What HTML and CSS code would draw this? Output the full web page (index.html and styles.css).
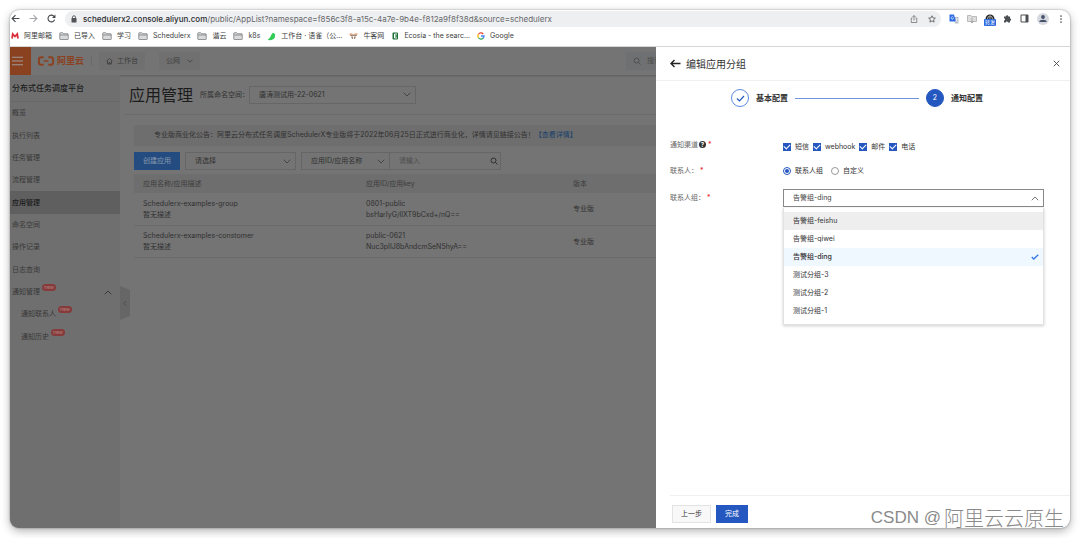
FILE: index.html
```html
<!DOCTYPE html>
<html lang="zh-CN">
<head>
<meta charset="utf-8">
<title>应用管理</title>
<link rel="stylesheet" href="styles.css">
</head>
<body>
<svg class="defs" width="0" height="0" aria-hidden="true">
  <symbol id="folder" viewBox="0 0 20 16"><path d="M1.500 14V2.500q0-1 1-1h5l2 2h8q1 0 1 1V14q0 1-1 1h-15q-1 0-1-1z" fill="#d9dadb" stroke="#77797b" stroke-width="1.500"/><path d="M2 6h16" stroke="#77797b" stroke-width="1.500"/></symbol>
  <symbol id="chev" viewBox="0 0 16 10"><path d="M1.500 1.500 8 8l6.500-6.500" fill="none" stroke="currentColor" stroke-width="2"/></symbol>
  <symbol id="lens" viewBox="0 0 16 16"><circle cx="7" cy="7" r="5" fill="none" stroke="currentColor" stroke-width="2"/><path d="m10.500 10.500 4.500 4.500" stroke="currentColor" stroke-width="2"/></symbol>
</svg>
<div class="window">
  <header class="toolbar">
    <button class="tool" aria-label="后退"><svg viewBox="0 0 16 16"><path d="M15 8H2M8 2 2 8l6 6" fill="none" stroke="#45484c" stroke-width="2"/></svg></button>
    <button class="tool" aria-label="前进"><svg viewBox="0 0 16 16"><path d="M1 8h13M8 2l6 6-6 6" fill="none" stroke="#a5a7aa" stroke-width="2"/></svg></button>
    <button class="tool" aria-label="刷新"><svg viewBox="0 0 16 16"><path d="M13.500 10A6 6 0 1 1 12 3.700L14 6" fill="none" stroke="#45484c" stroke-width="2"/><path d="M15 1v6H9z" fill="#45484c"/></svg></button>
    <div class="address">
      <svg class="lock" viewBox="0 0 12 16"><rect x="1" y="6" width="10" height="9" rx="1" fill="#505357"/><path d="M3 7V4.500a3 3 0 0 1 6 0V7" fill="none" stroke="#505357" stroke-width="1.800"/></svg>
      <span class="url"><b>schedulerx2.console.aliyun.com</b>/public/AppList?namespace=f856c3f8-a15c-4a7e-9b4e-f812a9f8f38d&amp;source=schedulerx</span>
      <svg class="ic8 share" viewBox="0 0 16 16"><path d="M5 6H2.500v9h11V6H11M8 11V1.500M5 4l3-3 3 3" fill="none" stroke="#606366" stroke-width="1.400"/></svg>
      <svg class="ic8" viewBox="0 0 16 16"><path d="m8 1.500 2 4.300 4.700.5-3.500 3.200 1 4.700L8 11.800l-4.200 2.400 1-4.700L1.300 6.300 6 5.800z" fill="none" stroke="#505357" stroke-width="1.600"/></svg>
    </div>
    <div class="extensions">
      <svg class="ic10" viewBox="0 0 20 20"><path d="M9 6h10v13H12z" fill="#b9bec8"/><path d="M1 1h9l4 14H1z" fill="#2f6de5"/><path d="M9 6.500A2.500 2.500 0 1 0 9 9H7M13 10h5m-2.500-1v1c0 3-1.500 5-3 6m1-4 4 4" fill="none" stroke="#fff" stroke-width="1.200"/></svg>
      <svg class="ic10" viewBox="0 0 20 20"><path d="M1 3h7l2 2h9v10H1z" fill="#dedede" stroke="#aaa" stroke-width="1.500"/><path d="M10 7v11m-3-3 3 3 3-3" fill="none" stroke="#999" stroke-width="1.600"/></svg>
      <span class="forward"><svg class="ic10" viewBox="0 0 20 20"><circle cx="10" cy="10" r="9" fill="#222"/><path d="M5 12c0-6 2-8 5-8s5 2 5 8M10 5v7" fill="none" stroke="#ddd" stroke-width="1.600"/></svg><span class="forward-tag">转发</span></span>
      <svg class="ic9" viewBox="0 0 18 18"><path d="M2 5h4a2.300 2.300 0 1 1 4.600 0H14v4a2.300 2.300 0 1 1 0 4.600V17h-4a2.200 2.200 0 0 0-4.400 0H2v-4a2.200 2.200 0 0 0 0-4.400z" fill="#4b4e53"/></svg>
      <svg class="ic9" viewBox="0 0 18 18"><path d="M2 2h14v14H2z" fill="none" stroke="#4b4e53" stroke-width="2"/><path d="M11 2h5v14h-5z" fill="#4b4e53"/></svg>
      <svg class="ic12" viewBox="0 0 24 24"><circle cx="12" cy="12" r="12" fill="#d5d8de"/><circle cx="12" cy="8" r="3.800" fill="#46506a"/><path d="M4.500 18c0-6 15-6 15 0z" fill="#46506a"/></svg>
      <svg class="ic8" viewBox="0 0 16 16"><g fill="#4b4e53"><circle cx="8" cy="2" r="1.700"/><circle cx="8" cy="8" r="1.700"/><circle cx="8" cy="14" r="1.700"/></g></svg>
    </div>
  </header>
  <nav class="bookmarks" aria-label="书签">
    <a href="#"><svg class="ic8" viewBox="0 0 16 16"><path d="M2 13 3.500 4 8 9l4.500-5L14 13" fill="none" stroke="#d92d38" stroke-width="3.500"/></svg>阿里邮箱</a>
    <a href="#"><svg class="fold"><use href="#folder"/></svg>已导入</a>
    <a href="#"><svg class="fold"><use href="#folder"/></svg>学习</a>
    <a href="#"><svg class="fold"><use href="#folder"/></svg>Schedulerx</a>
    <a href="#"><svg class="fold"><use href="#folder"/></svg>谐云</a>
    <a href="#"><svg class="fold"><use href="#folder"/></svg>k8s</a>
    <a href="#"><svg class="ic9" viewBox="0 0 18 18"><path d="M1 16C5 13 8 8 10 3c2-2 5-1 5 1l2 1c-2 1-1 3-1 5-1 5-7 7-15 6z" fill="#31cc56"/></svg>工作台 · 语雀（公...</a>
    <a href="#"><svg class="ic9" viewBox="0 0 18 18"><path d="M1 5h16l-2 3H3zM4 9h4v5H6zm6 0h4l-2 5h-2z" fill="#a28675"/><path d="M1 4h6M11 4h6" stroke="#e69150" stroke-width="2"/></svg>牛客网</a>
    <a href="#"><svg class="ic8" viewBox="0 0 16 16"><rect x="3" y="1" width="11" height="14" rx="2" fill="#1b7136"/><path d="M12 4H7v8h5M7 8h4" stroke="#fff" stroke-width="2" fill="none"/></svg>Ecosia - the searc...</a>
    <a href="#"><svg class="ic8" viewBox="0 0 16 16" fill="none" stroke-width="2.600"><path d="M3 4.500A6 6 0 0 1 12.500 4" stroke="#ea4335"/><path d="M3 4.500a6 6 0 0 0 0 7" stroke="#fbbc05"/><path d="M3 11.500a6 6 0 0 0 9 1" stroke="#34a853"/><path d="M12 12.500A6 6 0 0 0 14 8H8" stroke="#4285f4"/></svg>Google</a>
  </nav>

  <div class="app">
    <header class="topbar">
      <button class="burger" aria-label="菜单"><svg viewBox="0 0 24 20"><path d="M0 2h24M0 10h24M0 18h24" stroke="#a19a96" stroke-width="2.200"/></svg></button>
      <a class="brand" href="#"><svg viewBox="0 0 34 20"><path d="M12 2H7Q2 2 2 7v6q0 5 5 5h5M22 2h5q5 0 5 5v6q0 5-5 5h-5" fill="none" stroke="#8b4020" stroke-width="4"/><path d="M12 10h10" stroke="#8b4020" stroke-width="3"/></svg>阿里云</a>
      <button class="chip work"><svg class="ic7" viewBox="0 0 14 14"><path d="m1 6 6-5 6 5M3 5v7h8V5M6 12V9h2v3" fill="none" stroke="currentColor" stroke-width="1.600"/></svg>工作台</button>
      <button class="chip">公网<svg class="chev"><use href="#chev"/></svg></button>
      <label class="search"><svg class="ic8"><use href="#lens"/></svg><input type="search" placeholder="搜索" aria-label="搜索"></label>
    </header>
    <div class="body">
      <aside class="sidebar">
        <h2>分布式任务调度平台</h2>
        <nav class="menu">
          <a href="#">概览</a>
          <a href="#">执行列表</a>
          <a href="#">任务管理</a>
          <a href="#">流程管理</a>
          <a href="#" class="active">应用管理</a>
          <a href="#">命名空间</a>
          <a href="#">操作记录</a>
          <a href="#">日志查询</a>
          <a href="#">通知管理<span class="new">new</span><svg class="chev up"><use href="#chev"/></svg></a>
          <a href="#" class="sub">通知联系人<span class="new">new</span></a>
          <a href="#" class="sub">通知历史<span class="new">new</span></a>
        </nav>
        <button class="collapse" aria-label="收起"><svg viewBox="0 0 8 12"><path d="M6.500 1 1.500 6l5 5" fill="none" stroke="#474747" stroke-width="1.500"/></svg></button>
      </aside>
      <main class="content">
        <div class="heading">
          <h1>应用管理</h1>
          <label for="ns">所属命名空间：</label>
          <span class="select ns"><select id="ns"><option>唐涛测试用-22-0621</option></select><svg class="chev"><use href="#chev"/></svg></span>
        </div>
        <div class="panel">
          <p class="notice">专业版商业化公告：阿里云分布式任务调度SchedulerX专业版将于2022年06月25日正式进行商业化，详情请见链接公告！<a href="#">【查看详情】</a></p>
          <div class="filters">
            <button class="create">创建应用</button>
            <span class="select kind"><select aria-label="类型"><option>请选择</option></select><svg class="chev"><use href="#chev"/></svg></span>
            <div class="combo">
              <span class="select field"><select aria-label="字段"><option>应用ID/应用名称</option></select><svg class="chev"><use href="#chev"/></svg></span>
              <span class="query"><input type="text" placeholder="请输入" aria-label="关键字"><svg class="ic8"><use href="#lens"/></svg></span>
            </div>
          </div>
          <table>
            <colgroup><col class="c1"><col class="c2"><col></colgroup>
            <thead><tr><th>应用名称/应用描述</th><th>应用ID/应用key</th><th>版本</th></tr></thead>
            <tbody>
              <tr><td>Schedulerx-examples-group<br>暂无描述</td><td>0801-public<br>bsHarIyG/lIXT9bCxd+/nQ==</td><td>专业版</td></tr>
              <tr><td>Schedulerx-examples-constomer<br>暂无描述</td><td>public-0621<br>Nuc3pIIJ8bAndcmSeN5hyA==</td><td>专业版</td></tr>
            </tbody>
          </table>
        </div>
      </main>
    </div>

    <section class="drawer" role="dialog" aria-labelledby="dt">
      <header class="drawer-head">
        <button class="back" aria-label="返回"><svg viewBox="0 0 22 18"><path d="M21 9H2M9 2 2 9l7 7" fill="none" stroke="#222" stroke-width="2.800"/></svg></button>
        <h2 id="dt">编辑应用分组</h2>
        <button class="close" aria-label="关闭"><svg viewBox="0 0 14 14"><path d="m1.500 1.500 11 11m0-11-11 11" stroke="#444" stroke-width="1.800"/></svg></button>
      </header>
      <div class="drawer-body">
        <ol class="steps">
          <li><span class="dot done"><svg viewBox="0 0 18 14"><path d="m2 7 5 5 9-10" fill="none" stroke="#2458c0" stroke-width="2.400"/></svg></span>基本配置</li>
          <li class="line" aria-hidden="true"></li>
          <li><span class="dot">2</span>通知配置</li>
        </ol>
        <form class="form">
          <div class="row channels">
            <span class="name">通知渠道<i class="help">?</i><em>*</em></span>
            <div class="choices">
              <label><input type="checkbox" checked>短信</label>
              <label><input type="checkbox" checked>webhook</label>
              <label><input type="checkbox" checked>邮件</label>
              <label><input type="checkbox" checked>电话</label>
            </div>
          </div>
          <div class="row">
            <span class="name">联系人：<em>*</em></span>
            <div class="choices radios">
              <label><input type="radio" name="to" checked>联系人组</label>
              <label><input type="radio" name="to">自定义</label>
            </div>
          </div>
          <div class="row group">
            <label class="name" for="grp">联系人组：<em>*</em></label>
            <div class="picker">
              <span class="select"><select id="grp"><option>告警组-ding</option></select><svg class="chev up"><use href="#chev"/></svg></span>
              <ul class="options" role="listbox" aria-label="联系人组">
                <li role="option" class="hover">告警组-feishu</li>
                <li role="option">告警组-qiwei</li>
                <li role="option" class="chosen" aria-selected="true">告警组-ding<svg viewBox="0 0 16 12"><path d="m1.500 6 4 4 9-8.500" fill="none" stroke="#3478e0" stroke-width="2.600"/></svg></li>
                <li role="option">测试分组-3</li>
                <li role="option">测试分组-2</li>
                <li role="option">测试分组-1</li>
              </ul>
            </div>
          </div>
        </form>
      </div>
      <footer class="drawer-foot">
        <button class="prev">上一步</button>
        <button class="finish">完成</button>
      </footer>
      <div class="watermark"><span>CSDN @</span>阿里云云原生</div>
    </section>
  </div>
</div>
</body>
</html>
```
FILE: styles.css
```css
* { box-sizing: border-box; }
body {
  margin: 0;
  height: 100vh;
  padding: 10px;
  background: #fff;
  color: #333;
  font: 7px/10px Inter, "Noto Sans CJK SC", sans-serif;
}
button, input, select { font: inherit; color: inherit; margin: 0; padding: 0; border: 0; border-radius: 0; background: none; }
a { color: inherit; text-decoration: none; }
h1, h2, p, ul, ol { margin: 0; padding: 0; font-weight: 400; list-style: none; }
svg { display: block; flex: none; }
.defs { position: absolute; }
.ic7 { width: 7px; height: 7px; }
.ic8 { width: 8px; height: 8px; }
.ic9 { width: 9px; height: 9px; }
.ic10 { width: 10px; height: 10px; }
.ic12 { width: 12px; height: 12px; }
.chev { width: 8px; height: 5px; }
.up { transform: rotate(180deg); }

.window {
  height: 100%;
  display: flex;
  flex-direction: column;
  overflow: hidden;
  border-radius: 9px;
  background: #fff;
  box-shadow: 0 0 2px rgba(0,0,0,.4), 0 3px 10px rgba(0,0,0,.3);
}

/* browser chrome */
.toolbar { display: flex; align-items: center; height: 17px; padding: 0 5px 0 1px; flex: none; }
.tool { width: 9px; margin-right: 9px; }
.tool svg { width: 9px; height: 9px; }
.address {
  flex: 1;
  display: flex;
  align-items: center;
  height: 16px;
  padding: 0 5px 0 6px;
  border-radius: 8px;
  background: #eeeff1;
}
.lock { width: 6px; height: 8px; margin-right: 6px; }
.url { flex: 1; font-size: 8px; color: #66686b; white-space: nowrap; }
.url b { font-weight: 500; color: #292b2e; }
.share { margin-right: 10px; }
.extensions { display: flex; align-items: center; gap: 8px; margin-left: 8px; }
.forward { position: relative; }
.forward-tag {
  position: absolute;
  left: -1px;
  top: 5px;
  width: 12px;
  border-radius: 1px;
  background: #2867dc;
  color: #fff;
  font-size: 5px;
  line-height: 7px;
  text-align: center;
}
.bookmarks {
  display: flex;
  align-items: center;
  gap: 7px;
  height: 20px;
  padding: 0 1px 1px;
  flex: none;
  border-bottom: 1px solid #d9d9d9;
  color: #3c3e40;
  white-space: nowrap;
}
.bookmarks a { display: flex; align-items: center; gap: 5px; }
.fold { width: 10px; height: 8px; }

/* application behind the drawer */
.app { position: relative; flex: 1; min-height: 0; display: flex; flex-direction: column; background: #747474; color: #303030; }
.topbar { display: flex; align-items: center; height: 28px; flex: none; padding-right: 10px; box-shadow: 0 1px 2px rgba(0,0,0,.2); color: #3d3d3d; }
.burger { display: flex; align-items: center; align-self: stretch; width: 21px; padding-left: 2px; background: #8a4120; }
.burger svg { width: 11px; height: 10px; }
.brand { display: flex; align-items: center; gap: 3px; margin-left: 7px; padding-right: 7px; border-right: 1px solid #6a6a6a; color: #8b4020; font-size: 9px; font-weight: 700; }
.brand svg { width: 16px; height: 10px; }
.chip { display: flex; align-items: center; gap: 7px; height: 18px; padding: 0 7px; margin-left: 7px; background: #707070; }
.chip + .chip { margin-left: 14px; }
.work { gap: 4px; }
.chip .chev { width: 6px; height: 4px; }
.search { display: flex; align-items: center; gap: 6px; width: 180px; height: 18px; margin-left: 426px; padding-left: 7px; background: #6f7071; color: #505050; }
.search input { width: 100px; }
input::placeholder { color: #4c4c4c; opacity: 1; }

.body { display: flex; flex: 1; min-height: 0; }
.sidebar { position: relative; width: 110px; flex: none; background: #6f6f6f; }
.sidebar h2 { height: 27px; padding-left: 2px; border-bottom: 1px solid #686868; color: #202020; font-size: 8px; font-weight: 500; line-height: 26px; }
.menu { display: grid; grid-auto-rows: 1fr; height: 246px; color: #383838; }
.menu a { display: flex; align-items: center; padding: 0 8px 0 2px; }
.menu .active { background: #5f5f5f; color: #181818; font-weight: 500; }
.menu .sub { padding-left: 11px; }
.menu .chev { margin-left: auto; }
.new { margin: 0 0 9px 2px; width: 14px; border-radius: 4px; background: #863a3a; color: #b08080; font-size: 5px; line-height: 7px; text-align: center; }
.collapse {
  position: absolute;
  left: 110px;
  top: 211px;
  width: 10px;
  height: 34px;
  display: grid;
  place-items: center;
  background: #666;
  clip-path: polygon(0 0, 100% 12%, 100% 88%, 0 100%);
}
.collapse svg { width: 4px; height: 7px; }

.content { flex: 1; min-width: 0; }
.heading { display: flex; align-items: center; height: 40px; margin-left: 4px; padding-left: 5px; border-bottom: 1px solid #6c6c6c; }
.heading h1 { margin-right: 7px; color: #1c1c1c; font-size: 16px; line-height: 24px; }
.select { position: relative; display: flex; align-items: center; height: 18px; border: 1px solid #666; }
.select select { appearance: none; width: 100%; height: 100%; padding: 0 18px 0 9px; }
.select .chev { position: absolute; right: 4px; pointer-events: none; color: #444; }
.ns { width: 167px; }
.panel { padding: 10px 10px 0 14px; }
.notice { padding: 5px 20px 6px; background: #6e6e6e; }
.notice a { color: #173f6b; }
.filters { display: flex; gap: 5px; margin: 6px 0 4px; }
.create { width: 46px; height: 18px; background: #244c80; color: #8798ae; }
.kind { width: 111px; }
.combo { display: flex; }
.field { width: 89px; }
.query { display: flex; align-items: center; width: 111px; height: 18px; padding: 0 2px 0 9px; border: 1px solid #666; border-left: 0; }
.query input { flex: 1; min-width: 0; }
table { width: 100%; border-collapse: collapse; table-layout: fixed; }
.c1 { width: 223px; }
.c2 { width: 207px; }
th { height: 19px; padding: 0 9px; background: #6e6e6e; color: #3c3c3c; font-weight: 400; text-align: left; }
td { height: 32px; padding: 0 9px; border-bottom: 1px solid #6a6a6a; line-height: 11px; }

/* drawer */
.drawer { position: absolute; top: 0; right: 0; bottom: 0; width: 414px; display: flex; flex-direction: column; background: #fff; color: #333; }
.drawer-head { display: flex; align-items: center; height: 34px; padding: 0 10px 0 14px; border-bottom: 1px solid #f0f0f0; flex: none; }
.drawer-head h2 { font-size: 10px; line-height: 14px; margin-left: 5px; }
.back svg { width: 11px; height: 9px; }
.close { margin-left: auto; }
.close svg { width: 7px; height: 7px; }
.drawer-body { flex: 1; padding: 8px 26px 0 14px; }
.steps { display: flex; align-items: center; padding: 0 61px; font-size: 8px; font-weight: 700; }
.steps li { display: flex; align-items: center; gap: 7px; white-space: nowrap; }
.steps .line { flex: 1; height: 1px; margin: 0 7px; background: #6f96dc; }
.dot { display: grid; place-items: center; width: 18px; height: 18px; border: 1px solid #2458c0; border-radius: 50%; background: #2458c0; color: #fff; font-size: 7px; font-weight: 400; }
.done { background: #fff; border-color: #5c89dd; }
.dot svg { width: 9px; height: 7px; }
.form { margin-top: 28px; }
.row { display: grid; grid-template-columns: 113px 1fr; align-items: center; height: 24px; }
.name { display: flex; align-items: center; color: #666; }
.name em { margin-left: 2px; color: #e02020; font-style: normal; }
.channels .name { margin-bottom: 5px; }
.help { width: 7px; height: 7px; margin-left: 1px; border-radius: 50%; background: #333; color: #fff; font: 700 6px/7px Inter, sans-serif; text-align: center; }
.choices { display: flex; gap: 4px; }
.radios { gap: 8px; }
.choices label { display: flex; align-items: center; gap: 4px; }
.choices input { appearance: none; display: grid; place-items: center; width: 8px; height: 8px; background: #2458c0; }
.choices input[type="checkbox"]::before { content: ""; width: 5px; height: 3px; border: solid #fff; border-width: 0 0 1px 1px; transform: translateY(-1px) rotate(-45deg); }
.choices input[type="radio"] { border: 1px solid #999; border-radius: 50%; background: #fff; }
.choices input[type="radio"]:checked { border-color: #2458c0; }
.choices input[type="radio"]:checked::before { content: ""; width: 4px; height: 4px; border-radius: 50%; background: #2458c0; }
.group { height: 30px; }
.picker { position: relative; }
.picker .select { border-color: #888; color: #444; }
.picker .chev { color: #777; }
.options {
  position: absolute;
  top: 19px;
  left: 0;
  right: 0;
  padding: 4px 0;
  border: 1px solid #e2e2e2;
  border-top: 0;
  background: #fff;
  box-shadow: 0 1px 3px rgba(0,0,0,.2);
}
.options li { display: flex; align-items: center; justify-content: space-between; height: 18px; padding: 0 4px 0 9px; }
.options .hover { background: #eee; }
.options .chosen { background: #eff7ff; font-weight: 500; }
.options svg { width: 8px; height: 6px; }
.drawer-foot { display: flex; align-items: center; gap: 5px; height: 33px; margin-left: 14px; padding: 3px 2px 0; border-top: 1px solid #f0f0f0; flex: none; }
.prev { width: 39px; height: 18px; border: 1px solid #e3e3e3; background: #f8f8f8; }
.finish { width: 32px; height: 18px; background: #2458c0; color: #fff; }
.watermark { position: absolute; right: 6px; bottom: 0; display: flex; align-items: center; gap: 3px; color: #8a8a8a; font: 300 20px/20px "Noto Sans CJK SC", sans-serif; white-space: nowrap; }
.watermark span { font-family: "Liberation Sans", sans-serif; font-size: 17px; }
```
